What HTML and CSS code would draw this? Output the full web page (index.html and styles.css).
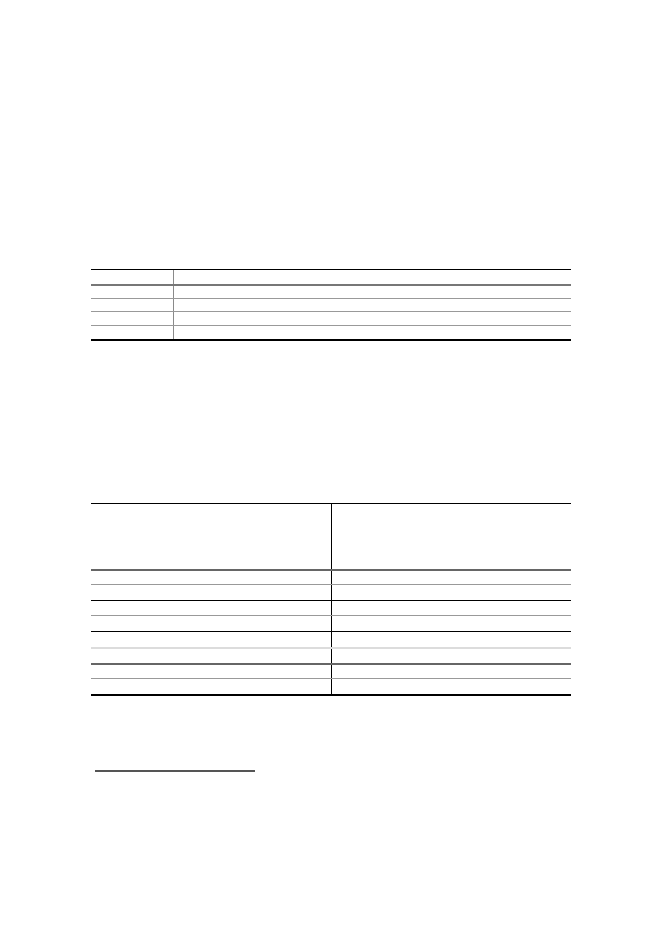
FILE: index.html
```html
<!DOCTYPE html>
<html>
<head>
<meta charset="utf-8">
<link rel="stylesheet" href="styles.css">
</head>
<body>
<div class="page">
  <div class="t1">
    <div class="row r-head"><div class="c1"></div><div class="c2"></div></div>
    <div class="row r-a"><div class="c1"></div><div class="c2"></div></div>
    <div class="row r-b"><div class="c1"></div><div class="c2"></div></div>
    <div class="row r-c"><div class="c1"></div><div class="c2"></div></div>
    <div class="row r-d"><div class="c1"></div><div class="c2"></div></div>
  </div>

  <div class="t2">
    <div class="row h65 b-dark2"><div class="c1"></div><div class="c2"></div></div>
    <div class="row h13 b-gray"><div class="c1"></div><div class="c2"></div></div>
    <div class="row h15 b-black"><div class="c1"></div><div class="c2"></div></div>
    <div class="row h14 b-gray"><div class="c1"></div><div class="c2"></div></div>
    <div class="row h15 b-black"><div class="c1"></div><div class="c2"></div></div>
    <div class="row h15 b-light"><div class="c1"></div><div class="c2"></div></div>
    <div class="row h14 b-dark2"><div class="c1"></div><div class="c2"></div></div>
    <div class="row h13 b-gray"><div class="c1"></div><div class="c2"></div></div>
    <div class="row h15"><div class="c1"></div><div class="c2"></div></div>
  </div>

  <div class="footnote-rule"></div>
</div>
</body>
</html>
```

FILE: styles.css
```css
html, body {
  margin: 0;
  padding: 0;
  background: #ffffff;
  font-family: "Liberation Serif", serif;
}

.page {
  width: 480px;
  padding: 269px 0 0 91px;
}

/* Table 1 */
.t1 {
  border-top: 1px solid #000;
  border-bottom: 2px solid #000;
}

.t1 .row {
  display: grid;
  grid-template-columns: 83px 1fr;
}

.t1 .c1 {
  border-right: 1px solid #8a8a8a;
}

.t1 .r-head { height: 14px; border-bottom: 2px solid #777; }
.t1 .r-a { height: 12px; border-bottom: 1px solid #999; }
.t1 .r-b { height: 12px; border-bottom: 1px solid #999; }
.t1 .r-c { height: 13px; border-bottom: 1px solid #999; }
.t1 .r-d { height: 13px; }

/* Table 2 */
.t2 {
  margin-top: 162px;
  border-top: 1px solid #000;
  border-bottom: 2px solid #000;
}

.t2 .row {
  display: grid;
  grid-template-columns: 241px 1fr;
}

.t2 .c1 {
  border-right: 1px solid #000;
}

.h65 { height: 65px; }
.h13 { height: 13px; }
.h14 { height: 14px; }
.h15 { height: 15px; }

.b-dark2 { border-bottom: 2px solid #666; }
.b-gray { border-bottom: 1px solid #999; }
.b-black { border-bottom: 1px solid #000; }
.b-light { border-bottom: 2px solid #dcdcdc; }

.footnote-rule {
  margin: 74px 0 0 4px;
  width: 160px;
  height: 0;
  border-top: 2px solid #555;
}
```
